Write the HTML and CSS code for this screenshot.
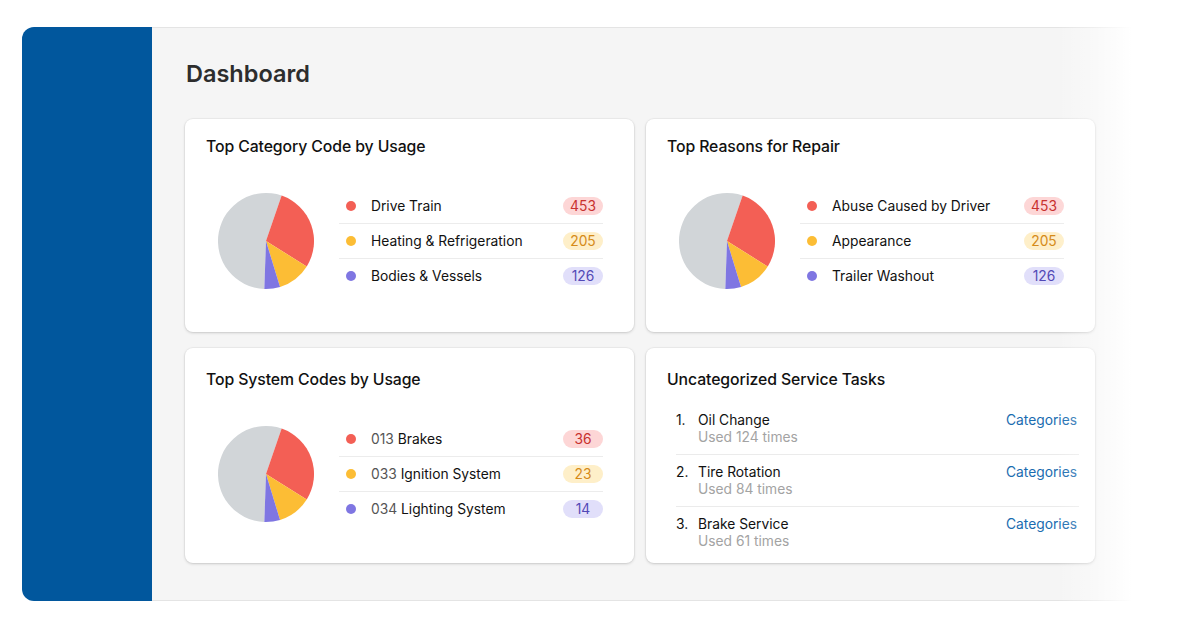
FILE: index.html
```html
<!DOCTYPE html>
<html lang="en">
<head>
<meta charset="utf-8">
<title>Dashboard</title>
<link rel="stylesheet" href="styles.css">
</head>
<body>
<div class="stage">
  <div class="window">
    <aside class="sidebar"></aside>
    <main class="main">
      <h1 class="page-title">Dashboard</h1>
      <div class="grid">
        <section class="card">
          <h2 class="card-title">Top Category Code by Usage</h2>
          <div class="chart-body">
            <svg class="pie" viewBox="-50 -50 100 100" aria-hidden="true">
              <path class="s-gray" d="M0 0 L-1.71 48.97 A49 49 0 1 1 15.95 -46.33 Z"/>
              <path class="s-red" d="M0 0 L15.95 -46.33 A49 49 0 0 1 41.55 25.97 Z"/>
              <path class="s-yellow" d="M0 0 L41.55 25.97 A49 49 0 0 1 14.33 46.86 Z"/>
              <path class="s-purple" d="M0 0 L14.33 46.86 A49 49 0 0 1 -1.71 48.97 Z"/>
            </svg>
            <ul class="legend">
              <li class="legend-row"><span class="dot dot-red"></span><span class="legend-label">Drive Train</span><span class="badge badge-red">453</span></li>
              <li class="legend-row"><span class="dot dot-yellow"></span><span class="legend-label">Heating &amp; Refrigeration</span><span class="badge badge-yellow">205</span></li>
              <li class="legend-row"><span class="dot dot-purple"></span><span class="legend-label">Bodies &amp; Vessels</span><span class="badge badge-purple">126</span></li>
            </ul>
          </div>
        </section>
        <section class="card">
          <h2 class="card-title">Top Reasons for Repair</h2>
          <div class="chart-body">
            <svg class="pie" viewBox="-50 -50 100 100" aria-hidden="true">
              <path class="s-gray" d="M0 0 L-1.71 48.97 A49 49 0 1 1 15.95 -46.33 Z"/>
              <path class="s-red" d="M0 0 L15.95 -46.33 A49 49 0 0 1 41.55 25.97 Z"/>
              <path class="s-yellow" d="M0 0 L41.55 25.97 A49 49 0 0 1 14.33 46.86 Z"/>
              <path class="s-purple" d="M0 0 L14.33 46.86 A49 49 0 0 1 -1.71 48.97 Z"/>
            </svg>
            <ul class="legend">
              <li class="legend-row"><span class="dot dot-red"></span><span class="legend-label">Abuse Caused by Driver</span><span class="badge badge-red">453</span></li>
              <li class="legend-row"><span class="dot dot-yellow"></span><span class="legend-label">Appearance</span><span class="badge badge-yellow">205</span></li>
              <li class="legend-row"><span class="dot dot-purple"></span><span class="legend-label">Trailer Washout</span><span class="badge badge-purple">126</span></li>
            </ul>
          </div>
        </section>
        <section class="card card-low">
          <h2 class="card-title">Top System Codes by Usage</h2>
          <div class="chart-body">
            <svg class="pie" viewBox="-50 -50 100 100" aria-hidden="true">
              <path class="s-gray" d="M0 0 L-1.71 48.97 A49 49 0 1 1 15.95 -46.33 Z"/>
              <path class="s-red" d="M0 0 L15.95 -46.33 A49 49 0 0 1 41.55 25.97 Z"/>
              <path class="s-yellow" d="M0 0 L41.55 25.97 A49 49 0 0 1 14.33 46.86 Z"/>
              <path class="s-purple" d="M0 0 L14.33 46.86 A49 49 0 0 1 -1.71 48.97 Z"/>
            </svg>
            <ul class="legend">
              <li class="legend-row"><span class="dot dot-red"></span><span class="legend-label"><span class="code">013</span> Brakes</span><span class="badge badge-red">36</span></li>
              <li class="legend-row"><span class="dot dot-yellow"></span><span class="legend-label"><span class="code">033</span> Ignition System</span><span class="badge badge-yellow">23</span></li>
              <li class="legend-row"><span class="dot dot-purple"></span><span class="legend-label"><span class="code">034</span> Lighting System</span><span class="badge badge-purple">14</span></li>
            </ul>
          </div>
        </section>
        <section class="card card-low">
          <h2 class="card-title">Uncategorized Service Tasks</h2>
          <ol class="tasks">
            <li class="task">
              <span class="task-num">1.</span>
              <div class="task-text">
                <div class="task-name">Oil Change</div>
                <div class="task-sub">Used 124 times</div>
              </div>
              <a class="task-link" href="#">Categories</a>
            </li>
            <li class="task">
              <span class="task-num">2.</span>
              <div class="task-text">
                <div class="task-name">Tire Rotation</div>
                <div class="task-sub">Used 84 times</div>
              </div>
              <a class="task-link" href="#">Categories</a>
            </li>
            <li class="task">
              <span class="task-num">3.</span>
              <div class="task-text">
                <div class="task-name">Brake Service</div>
                <div class="task-sub">Used 61 times</div>
              </div>
              <a class="task-link" href="#">Categories</a>
            </li>
          </ol>
        </section>
      </div>
    </main>
    <div class="fade"></div>
  </div>
</div>
</body>
</html>
```

FILE: styles.css
```css
* { box-sizing: border-box; }

html, body {
  margin: 0;
  padding: 0;
  background: #ffffff;
}

body {
  font-family: Inter, "Noto Sans", "Liberation Sans", sans-serif;
  color: #1a1a1a;
  width: 1200px;
  height: 628px;
  overflow: hidden;
}

.stage {
  padding: 27px 0 0 22px;
}

.window {
  position: relative;
  display: flex;
  width: 1110px;
  height: 574px;
  border-radius: 12px 0 0 12px;
  overflow: hidden;
}

.sidebar {
  width: 130px;
  flex: none;
  background: #01579d;
}

.main {
  flex: 1;
  background: #f5f5f5;
  border-top: 1px solid #e4e4e4;
  border-bottom: 1px solid #e4e4e4;
  padding: 31px 0 0 33px;
}

.page-title {
  margin: 0 0 0 1px;
  font-size: 23.5px;
  line-height: 30px;
  font-weight: 600;
  color: #2d2d2d;
  letter-spacing: 0;
}

.grid {
  margin-top: 30px;
  display: grid;
  grid-template-columns: 449px 449px;
  grid-template-rows: 213px 215px;
  column-gap: 12px;
  row-gap: 16px;
}

.card {
  background: #ffffff;
  border-radius: 8px;
  box-shadow: 0 1px 3px rgba(0, 0, 0, 0.16), 0 0 0 1px rgba(0, 0, 0, 0.03);
  padding: 18px 0 0 21px;
  display: flex;
  flex-direction: column;
}

.card-low {
  padding-top: 22px;
}

.card-title {
  margin: 0;
  font-size: 15.8px;
  line-height: 20px;
  font-weight: 500;
  color: #111111;
  letter-spacing: -0.1px;
}

.chart-body {
  flex: 1;
  display: flex;
  align-items: center;
  padding: 0 31px 7px 11px;
}

.card-low .chart-body {
  padding-bottom: 5px;
}

.pie {
  width: 98px;
  height: 98px;
  flex: none;
  display: block;
}

.s-gray { fill: #d1d5d8; }
.s-red { fill: #f35f55; }
.s-yellow { fill: #fcbd35; }
.s-purple { fill: #7f76e2; }

.legend {
  list-style: none;
  margin: 0 0 0 24px;
  padding: 0;
  flex: 1;
}

.legend-row {
  display: flex;
  align-items: center;
  height: 35px;
  border-bottom: 1px solid #ececec;
  padding-left: 7px;
  font-size: 13.8px;
  color: #111111;
}

.legend-row:last-child {
  border-bottom: none;
}

.dot {
  width: 10px;
  height: 10px;
  border-radius: 50%;
  flex: none;
  margin-right: 15px;
}

.dot-red { background: #f35f55; }
.dot-yellow { background: #fcbd35; }
.dot-purple { background: #7f76e2; }

.legend-label {
  flex: 1;
}

.code {
  color: #555555;
}

.badge {
  min-width: 40px;
  height: 18px;
  padding: 0 7px;
  border-radius: 9px;
  font-size: 13.8px;
  line-height: 18px;
  text-align: center;
}

.badge-red { background: #fdd6d6; color: #c8312e; }
.badge-yellow { background: #feefc9; color: #d58a18; }
.badge-purple { background: #e1dffa; color: #5249b6; }

.tasks {
  list-style: none;
  margin: 13px 16px 0 9px;
  padding: 0;
}

.task {
  display: flex;
  align-items: flex-start;
  height: 52px;
  padding-top: 8px;
  border-bottom: 1px solid #ebebeb;
  font-size: 13.8px;
  line-height: 18px;
}

.task:last-child {
  border-bottom: none;
}

.task-num {
  width: 22px;
  flex: none;
  color: #111111;
}

.task-text {
  flex: 1;
}

.task-name {
  color: #111111;
}

.task-sub {
  color: #a3a3a3;
  margin-top: -1px;
}

.task-link {
  color: #1a6cb0;
  text-decoration: none;
  margin-right: 2px;
}

.fade {
  position: absolute;
  top: 0;
  right: 0;
  width: 75px;
  height: 100%;
  background: linear-gradient(to right, rgba(255,255,255,0) 0%, rgba(255,255,255,0.4) 50%, #ffffff 100%);
  pointer-events: none;
}
```
